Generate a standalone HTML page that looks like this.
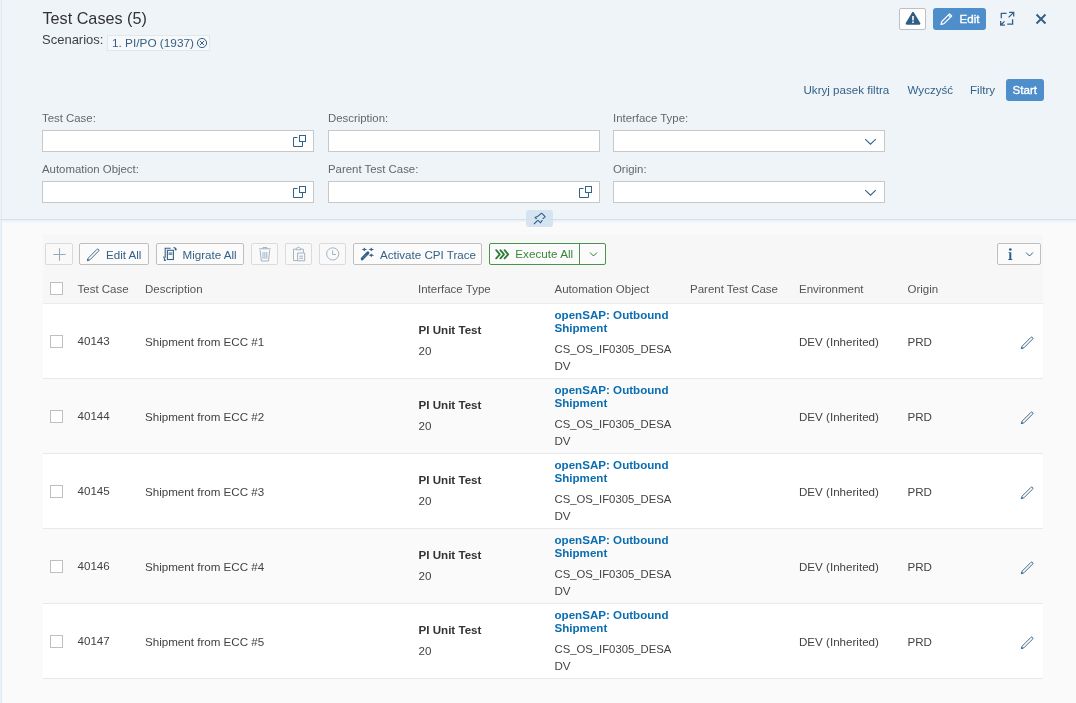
<!DOCTYPE html>
<html><head><meta charset="utf-8">
<style>
html,body{margin:0;padding:0;-webkit-font-smoothing:antialiased;}
body{will-change:transform;width:1076px;height:703px;overflow:hidden;position:relative;background:#fafafa;font-family:"Liberation Sans",sans-serif;color:#333;}
.a{position:absolute;}
.t{position:absolute;line-height:1;white-space:nowrap;}
#hdr{left:0;top:0;width:1076px;height:219px;background:#eff4f9;}
#hline{left:0;top:219px;width:1076px;height:1px;background:#d3e1ee;z-index:1;}
#lstrip{left:0;top:220px;width:2px;height:483px;background:#eff4f9;}
.inp{position:absolute;height:20px;width:270px;background:#fff;border:1px solid #c8c8c8;}
.lbl{font-size:11.4px;color:#666;}
.btn{position:absolute;box-sizing:border-box;height:22px;border:1px solid #bfbfbf;border-radius:2px;background:#fbfbfb;}
.btxt{font-size:11.6px;color:#346187;}
.dis{opacity:.5;}
.th{font-size:11.5px;color:#555;}
.td{font-size:11.6px;color:#424242;}
.cb{position:absolute;box-sizing:border-box;width:13px;height:13px;border:1px solid #bfbfbf;background:#fff;}
.row{position:absolute;left:43px;width:1000px;height:74px;border-bottom:1px solid #e9e9e9;}
</style></head>
<body>
<div id="hdr" class="a"></div>
<div id="hline" class="a"></div>
<div id="lstrip" class="a"></div>
<div class="a" style="left:0;top:0;width:1px;height:703px;background:#eaf1f8;"></div>
<div class="a" style="left:1px;top:0;width:1px;height:703px;background:#e3e9ef;"></div>
<div class="a" style="left:0;top:220px;width:1076px;height:3px;background:linear-gradient(#e6eef6,rgba(250,250,250,0));"></div>

<!-- title -->
<div class="t" style="left:42.5px;top:10.2px;font-size:16.2px;color:#333;">Test Cases (5)</div>
<div class="t" style="left:42px;top:32.6px;font-size:13px;color:#404040;">Scenarios:</div>
<div class="a" style="left:107px;top:35px;width:101px;height:14px;border:1px solid #e3e6ea;background:#f6f8fa;"></div>
<div class="t" style="left:112px;top:38.2px;font-size:11.8px;color:#346187;">1. PI/PO (1937)</div>
<svg class="a" style="left:196px;top:37px" width="12" height="12" viewBox="0 0 12 12"><circle cx="6" cy="6" r="4.6" fill="none" stroke="#346187" stroke-width="1"/><path d="M3.9 3.9L8.1 8.1M8.1 3.9L3.9 8.1" stroke="#346187" stroke-width="1"/></svg>

<!-- top right buttons -->
<div class="btn" style="left:899px;top:8px;width:27px;height:22px;background:#fff;"></div>
<svg class="a" style="left:905px;top:11px" width="16" height="15" viewBox="0 0 16 15"><path d="M8 2L14.3 12.6H1.7Z" fill="#2f5f86" stroke="#2f5f86" stroke-width="2.2" stroke-linejoin="round"/><rect x="7.2" y="5" width="1.6" height="4.4" fill="#fff"/><rect x="7.2" y="10.4" width="1.6" height="1.6" fill="#fff"/></svg>
<div class="a" style="left:933px;top:8px;width:53px;height:22px;border-radius:3px;background:#4d8ecb;"></div>
<svg class="a" style="left:939px;top:12px" width="15" height="14" viewBox="0 0 15 14"><path d="M2 12.5L2.8 9.5L10.5 1.8L12.7 4L5 11.7Z M9.3 3L11.5 5.2" fill="none" stroke="#fff" stroke-width="1.2" stroke-linejoin="round"/></svg>
<div class="t" style="left:959.5px;top:12.6px;font-size:11.6px;-webkit-text-stroke:0.35px #fff;color:#fff;">Edit</div>
<svg class="a" style="left:996px;top:8px" width="22" height="22" viewBox="0 0 22 22"><path d="M5.3 10.3V5.3H10.6 M13.1 4.4H17.7V8.4 M17.7 4.4L12.6 9.4 M4.7 13.1V17.2H9 M4.7 17.2L8.5 13.4 M16.6 11.2V16.2H11.2" fill="none" stroke="#346187" stroke-width="1.3"/></svg>
<svg class="a" style="left:1035px;top:13px" width="12" height="12" viewBox="0 0 12 12"><path d="M1.5 1.5L10.5 10.5M10.5 1.5L1.5 10.5" stroke="#346187" stroke-width="2"/></svg>

<!-- filter bar actions -->
<div class="t btxt" style="left:803.5px;top:84px;">Ukryj pasek filtra</div>
<div class="t btxt" style="left:907.5px;top:84px;">Wyczyść</div>
<div class="t btxt" style="left:970px;top:84px;">Filtry</div>
<div class="a" style="left:1006px;top:79px;width:38px;height:22px;border-radius:3px;background:#4d8ecb;"></div>
<div class="t" style="left:1012.5px;top:83.8px;font-size:11.6px;-webkit-text-stroke:0.35px #fff;color:#fff;">Start</div>

<!-- filter fields -->
<div class="t lbl" style="left:42px;top:113.2px;">Test Case:</div>
<div class="t lbl" style="left:328px;top:113.2px;">Description:</div>
<div class="t lbl" style="left:613px;top:113.2px;">Interface Type:</div>
<div class="inp" style="left:42px;top:130px;"></div>
<div class="inp" style="left:328px;top:130px;"></div>
<div class="inp" style="left:613px;top:130px;"></div>
<div class="t lbl" style="left:42px;top:164px;">Automation Object:</div>
<div class="t lbl" style="left:328px;top:164px;">Parent Test Case:</div>
<div class="t lbl" style="left:613px;top:164px;">Origin:</div>
<div class="inp" style="left:42px;top:181px;"></div>
<div class="inp" style="left:328px;top:181px;"></div>
<div class="inp" style="left:613px;top:181px;"></div>
<!-- value help icons -->
<svg class="a" style="left:293px;top:135px" width="13" height="12" viewBox="0 0 13 12"><path d="M4.5 2.5H0.5V11.5H9.5V7" fill="none" stroke="#346187" stroke-width="1"/><rect x="6.5" y="0.5" width="6" height="6" fill="#fff" stroke="#346187" stroke-width="1"/></svg>
<svg class="a" style="left:293px;top:186px" width="13" height="12" viewBox="0 0 13 12"><path d="M4.5 2.5H0.5V11.5H9.5V7" fill="none" stroke="#346187" stroke-width="1"/><rect x="6.5" y="0.5" width="6" height="6" fill="#fff" stroke="#346187" stroke-width="1"/></svg>
<svg class="a" style="left:579px;top:186px" width="13" height="12" viewBox="0 0 13 12"><path d="M4.5 2.5H0.5V11.5H9.5V7" fill="none" stroke="#346187" stroke-width="1"/><rect x="6.5" y="0.5" width="6" height="6" fill="#fff" stroke="#346187" stroke-width="1"/></svg>
<!-- dropdown arrows -->
<svg class="a" style="left:864px;top:137.8px" width="13" height="8" viewBox="0 0 13 8"><path d="M1.2 1.2L6.5 6.2L11.8 1.2" fill="none" stroke="#346187" stroke-width="1.1"/></svg>
<svg class="a" style="left:864px;top:188.8px" width="13" height="8" viewBox="0 0 13 8"><path d="M1.2 1.2L6.5 6.2L11.8 1.2" fill="none" stroke="#346187" stroke-width="1.1"/></svg>

<!-- pin -->
<div class="a" style="left:526px;top:210px;width:27px;height:17px;border-radius:3px;background:#d6e4f1;"></div>
<svg class="a" style="left:533px;top:212px" width="14" height="13" viewBox="0 0 14 13"><path d="M0.9 12.1L4.6 8.4" stroke="#2f5f86" stroke-width="1.2"/><path d="M2 5.4L4.8 4.3L8.5 1.2L12.2 4.7L10.4 6.4L7.6 10.8Z" fill="none" stroke="#2f5f86" stroke-width="1.1" stroke-linejoin="round"/></svg>

<!-- table area bg -->
<div class="a" style="left:43px;top:234px;width:1000px;height:70px;background:#f7f7f7;"></div>
<div class="a" style="left:43px;top:303px;width:1000px;height:1px;background:#ebebeb;"></div>

<!-- toolbar -->
<div class="btn dis" style="left:45px;top:243px;width:28px;"></div>
<svg class="a dis" style="left:52.5px;top:247.5px" width="13" height="13" viewBox="0 0 13 13"><path d="M6.5 0.3V12.7M0.3 6.5H12.7" stroke="#346187" stroke-width="1.1"/></svg>
<div class="btn" style="left:79px;top:243px;width:70px;"></div>
<svg class="a" style="left:85.5px;top:246.8px" width="15" height="15" viewBox="0 0 15 15"><path d="M2.15 11.15L10.85 2.45A1.2 1.2 0 0 1 12.55 4.15L3.85 12.85L1.3 13.7Z" fill="none" stroke="#346187" stroke-width="0.95" stroke-linejoin="round"/><path d="M1.2 13.8L1.8 11.8L3.2 13.2Z" fill="#346187"/></svg>
<div class="t btxt" style="left:106px;top:248.7px;">Edit All</div>
<div class="btn" style="left:156px;top:243px;width:88px;"></div>
<svg class="a" style="left:162px;top:246px" width="16" height="16" viewBox="0 0 16 16"><path d="M8.6 2.3H3.2V11.7" fill="none" stroke="#346187" stroke-width="1.1"/><rect x="5.4" y="4.3" width="6" height="9.2" fill="none" stroke="#346187" stroke-width="1.1"/><path d="M6.6 7H10.3M6.6 8.3H10.3" stroke="#346187" stroke-width="0.9"/><path d="M11.5 1.6Q13.6 1.6 13.9 3.2" fill="none" stroke="#346187" stroke-width="1.2"/><path d="M12.4 3L15 2.8L14 5Z" fill="#346187"/><path d="M2 10.5Q1.4 12.6 3 13.3" fill="none" stroke="#346187" stroke-width="1.2"/><path d="M2.3 12.3L4.4 14.8L1.8 14.9Z" fill="#346187"/></svg>
<div class="t btxt" style="left:182.5px;top:248.7px;">Migrate All</div>
<div class="btn dis" style="left:251px;top:243px;width:27px;"></div>
<svg class="a dis" style="left:258px;top:246px" width="14" height="16" viewBox="0 0 14 16"><path d="M1 2.8H12.8 M5 2.8V1.5H8.8V2.8 M2.1 4.2L3.3 15H10.5L11.7 4.2 M5 6V12.8M6.9 6V12.8M8.8 6V12.8" fill="none" stroke="#346187" stroke-width="0.9"/></svg>
<div class="btn dis" style="left:285px;top:243px;width:27px;"></div>
<svg class="a dis" style="left:292px;top:246px" width="14" height="16" viewBox="0 0 14 16"><path d="M5.3 14.6H1.5V3.2H4.3 M8.7 3.2H11.4V6.6 M4.3 3.8V2.4L6.5 1.2L8.7 2.4V3.8Z M5.6 7H12.7V14.8H5.6Z M7.3 10.2H11M7.3 12.3H11" fill="none" stroke="#346187" stroke-width="0.9"/></svg>
<div class="btn dis" style="left:319px;top:243px;width:27px;"></div>
<svg class="a dis" style="left:326px;top:247px" width="14" height="14" viewBox="0 0 14 14"><circle cx="6.7" cy="6.9" r="6.1" fill="none" stroke="#346187" stroke-width="0.9"/><path d="M6.6 3.4V7.5H10" fill="none" stroke="#346187" stroke-width="0.9"/></svg>
<div class="btn" style="left:353px;top:243px;width:129px;"></div>
<svg class="a" style="left:358px;top:246px" width="18" height="16" viewBox="0 0 18 16"><path d="M4.2 12.8L9.9 6.9" stroke="#346187" stroke-width="3" stroke-linecap="round"/><path d="M5.6 11.3L6.2 10.7M7.3 9.5L7.9 8.9" stroke="#fff" stroke-width="0.8" opacity="0.6"/><path d="M3.60 3.40L5.65 2.65L6.40 1.50L7.15 2.65L9.20 3.40L7.15 4.15L6.40 5.30L5.65 4.15Z M10.50 3.40L12.55 2.65L13.30 1.50L14.05 2.65L16.10 3.40L14.05 4.15L13.30 5.30L12.55 4.15Z M10.50 9.30L12.55 8.55L13.30 7.40L14.05 8.55L16.10 9.30L14.05 10.05L13.30 11.20L12.55 10.05Z" fill="#346187"/></svg>
<div class="t btxt" style="left:380px;top:248.7px;">Activate CPI Trace</div>
<div class="a" style="left:489px;top:243px;width:115px;height:20px;border:1px solid #4a944a;border-radius:2px;background:#fbfbfb;"></div>
<div class="a" style="left:579px;top:244px;width:1px;height:20px;background:#4a944a;"></div>
<svg class="a" style="left:495px;top:249px" width="15" height="11" viewBox="0 0 15 11"><path d="M1.2 1.2L4.8 5.3L1.2 9.4 M5.4 1.2L9 5.3L5.4 9.4 M9.6 1.2L13.2 5.3L9.6 9.4" fill="none" stroke="#2d7a35" stroke-width="1.8" stroke-linecap="round" stroke-linejoin="round"/></svg>
<div class="t" style="left:515.3px;top:248.4px;font-size:11.7px;color:#3a883a;">Execute All</div>
<svg class="a" style="left:589px;top:251px" width="9" height="7" viewBox="0 0 9 7"><path d="M1 1.5L4.5 5L8 1.5" fill="none" stroke="#2b7c2b" stroke-width="1"/></svg>
<div class="btn" style="left:997px;top:243px;width:44px;"></div>
<svg class="a" style="left:1007px;top:247px" width="7" height="14" viewBox="0 0 7 14"><circle cx="3.3" cy="2.5" r="1.35" fill="#2f5f86"/><path d="M1.5 5.2H4.3V12.1H5.3V13.1H1.3V12.1H2.3V6.1H1.5Z" fill="#2f5f86"/></svg>
<svg class="a" style="left:1025px;top:251px" width="9" height="7" viewBox="0 0 9 7"><path d="M1 1.5L4.5 5L8 1.5" fill="none" stroke="#346187" stroke-width="1"/></svg>

<!-- table header -->
<div class="cb" style="left:50px;top:282px;"></div>
<div class="t th" style="left:77.5px;top:283.7px;">Test Case</div>
<div class="t th" style="left:145px;top:283.7px;">Description</div>
<div class="t th" style="left:418px;top:283.7px;">Interface Type</div>
<div class="t th" style="left:554.5px;top:283.7px;">Automation Object</div>
<div class="t th" style="left:690px;top:283.7px;">Parent Test Case</div>
<div class="t th" style="left:799px;top:283.7px;">Environment</div>
<div class="t th" style="left:907.5px;top:283.7px;">Origin</div>

<div id="rows">
<div class="row" style="top:304px;background:#fff;">
<div class="cb" style="left:7px;top:31px;"></div>
<div class="t td" style="left:34.5px;top:30.6px;">40143</div>
<div class="t td" style="left:102px;top:31.5px;">Shipment from ECC #1</div>
<div class="t td" style="left:375.5px;top:20.1px;font-weight:bold;color:#333;">PI Unit Test</div>
<div class="t td" style="left:375.5px;top:41.3px;">20</div>
<div class="t td" style="left:511.5px;top:5.1px;font-weight:bold;color:#0a6db0;">openSAP: Outbound</div>
<div class="t td" style="left:511.5px;top:18.1px;font-weight:bold;color:#0a6db0;">Shipment</div>
<div class="t td" style="left:511.5px;top:40px;font-size:11.3px;">CS_OS_IF0305_DESA</div>
<div class="t td" style="left:511.5px;top:55.9px;">DV</div>
<div class="t td" style="left:756px;top:31.5px;">DEV (Inherited)</div>
<div class="t td" style="left:864.5px;top:31.5px;">PRD</div>
<svg class="a" style="left:977px;top:30.5px" width="15" height="15" viewBox="0 0 15 15"><path d="M2.15 11.15L10.85 2.45A1.2 1.2 0 0 1 12.55 4.15L3.85 12.85L1.3 13.7Z" fill="none" stroke="#346187" stroke-width="0.95" stroke-linejoin="round"/><path d="M1.2 13.8L1.8 11.8L3.2 13.2Z" fill="#346187"/></svg>
</div>
<div class="row" style="top:379px;background:#fafafa;">
<div class="cb" style="left:7px;top:31px;"></div>
<div class="t td" style="left:34.5px;top:30.6px;">40144</div>
<div class="t td" style="left:102px;top:31.5px;">Shipment from ECC #2</div>
<div class="t td" style="left:375.5px;top:20.1px;font-weight:bold;color:#333;">PI Unit Test</div>
<div class="t td" style="left:375.5px;top:41.3px;">20</div>
<div class="t td" style="left:511.5px;top:5.1px;font-weight:bold;color:#0a6db0;">openSAP: Outbound</div>
<div class="t td" style="left:511.5px;top:18.1px;font-weight:bold;color:#0a6db0;">Shipment</div>
<div class="t td" style="left:511.5px;top:40px;font-size:11.3px;">CS_OS_IF0305_DESA</div>
<div class="t td" style="left:511.5px;top:55.9px;">DV</div>
<div class="t td" style="left:756px;top:31.5px;">DEV (Inherited)</div>
<div class="t td" style="left:864.5px;top:31.5px;">PRD</div>
<svg class="a" style="left:977px;top:30.5px" width="15" height="15" viewBox="0 0 15 15"><path d="M2.15 11.15L10.85 2.45A1.2 1.2 0 0 1 12.55 4.15L3.85 12.85L1.3 13.7Z" fill="none" stroke="#346187" stroke-width="0.95" stroke-linejoin="round"/><path d="M1.2 13.8L1.8 11.8L3.2 13.2Z" fill="#346187"/></svg>
</div>
<div class="row" style="top:454px;background:#fff;">
<div class="cb" style="left:7px;top:31px;"></div>
<div class="t td" style="left:34.5px;top:30.6px;">40145</div>
<div class="t td" style="left:102px;top:31.5px;">Shipment from ECC #3</div>
<div class="t td" style="left:375.5px;top:20.1px;font-weight:bold;color:#333;">PI Unit Test</div>
<div class="t td" style="left:375.5px;top:41.3px;">20</div>
<div class="t td" style="left:511.5px;top:5.1px;font-weight:bold;color:#0a6db0;">openSAP: Outbound</div>
<div class="t td" style="left:511.5px;top:18.1px;font-weight:bold;color:#0a6db0;">Shipment</div>
<div class="t td" style="left:511.5px;top:40px;font-size:11.3px;">CS_OS_IF0305_DESA</div>
<div class="t td" style="left:511.5px;top:55.9px;">DV</div>
<div class="t td" style="left:756px;top:31.5px;">DEV (Inherited)</div>
<div class="t td" style="left:864.5px;top:31.5px;">PRD</div>
<svg class="a" style="left:977px;top:30.5px" width="15" height="15" viewBox="0 0 15 15"><path d="M2.15 11.15L10.85 2.45A1.2 1.2 0 0 1 12.55 4.15L3.85 12.85L1.3 13.7Z" fill="none" stroke="#346187" stroke-width="0.95" stroke-linejoin="round"/><path d="M1.2 13.8L1.8 11.8L3.2 13.2Z" fill="#346187"/></svg>
</div>
<div class="row" style="top:529px;background:#fafafa;">
<div class="cb" style="left:7px;top:31px;"></div>
<div class="t td" style="left:34.5px;top:30.6px;">40146</div>
<div class="t td" style="left:102px;top:31.5px;">Shipment from ECC #4</div>
<div class="t td" style="left:375.5px;top:20.1px;font-weight:bold;color:#333;">PI Unit Test</div>
<div class="t td" style="left:375.5px;top:41.3px;">20</div>
<div class="t td" style="left:511.5px;top:5.1px;font-weight:bold;color:#0a6db0;">openSAP: Outbound</div>
<div class="t td" style="left:511.5px;top:18.1px;font-weight:bold;color:#0a6db0;">Shipment</div>
<div class="t td" style="left:511.5px;top:40px;font-size:11.3px;">CS_OS_IF0305_DESA</div>
<div class="t td" style="left:511.5px;top:55.9px;">DV</div>
<div class="t td" style="left:756px;top:31.5px;">DEV (Inherited)</div>
<div class="t td" style="left:864.5px;top:31.5px;">PRD</div>
<svg class="a" style="left:977px;top:30.5px" width="15" height="15" viewBox="0 0 15 15"><path d="M2.15 11.15L10.85 2.45A1.2 1.2 0 0 1 12.55 4.15L3.85 12.85L1.3 13.7Z" fill="none" stroke="#346187" stroke-width="0.95" stroke-linejoin="round"/><path d="M1.2 13.8L1.8 11.8L3.2 13.2Z" fill="#346187"/></svg>
</div>
<div class="row" style="top:604px;background:#fff;">
<div class="cb" style="left:7px;top:31px;"></div>
<div class="t td" style="left:34.5px;top:30.6px;">40147</div>
<div class="t td" style="left:102px;top:31.5px;">Shipment from ECC #5</div>
<div class="t td" style="left:375.5px;top:20.1px;font-weight:bold;color:#333;">PI Unit Test</div>
<div class="t td" style="left:375.5px;top:41.3px;">20</div>
<div class="t td" style="left:511.5px;top:5.1px;font-weight:bold;color:#0a6db0;">openSAP: Outbound</div>
<div class="t td" style="left:511.5px;top:18.1px;font-weight:bold;color:#0a6db0;">Shipment</div>
<div class="t td" style="left:511.5px;top:40px;font-size:11.3px;">CS_OS_IF0305_DESA</div>
<div class="t td" style="left:511.5px;top:55.9px;">DV</div>
<div class="t td" style="left:756px;top:31.5px;">DEV (Inherited)</div>
<div class="t td" style="left:864.5px;top:31.5px;">PRD</div>
<svg class="a" style="left:977px;top:30.5px" width="15" height="15" viewBox="0 0 15 15"><path d="M2.15 11.15L10.85 2.45A1.2 1.2 0 0 1 12.55 4.15L3.85 12.85L1.3 13.7Z" fill="none" stroke="#346187" stroke-width="0.95" stroke-linejoin="round"/><path d="M1.2 13.8L1.8 11.8L3.2 13.2Z" fill="#346187"/></svg>
</div>
</div>
</body></html>
